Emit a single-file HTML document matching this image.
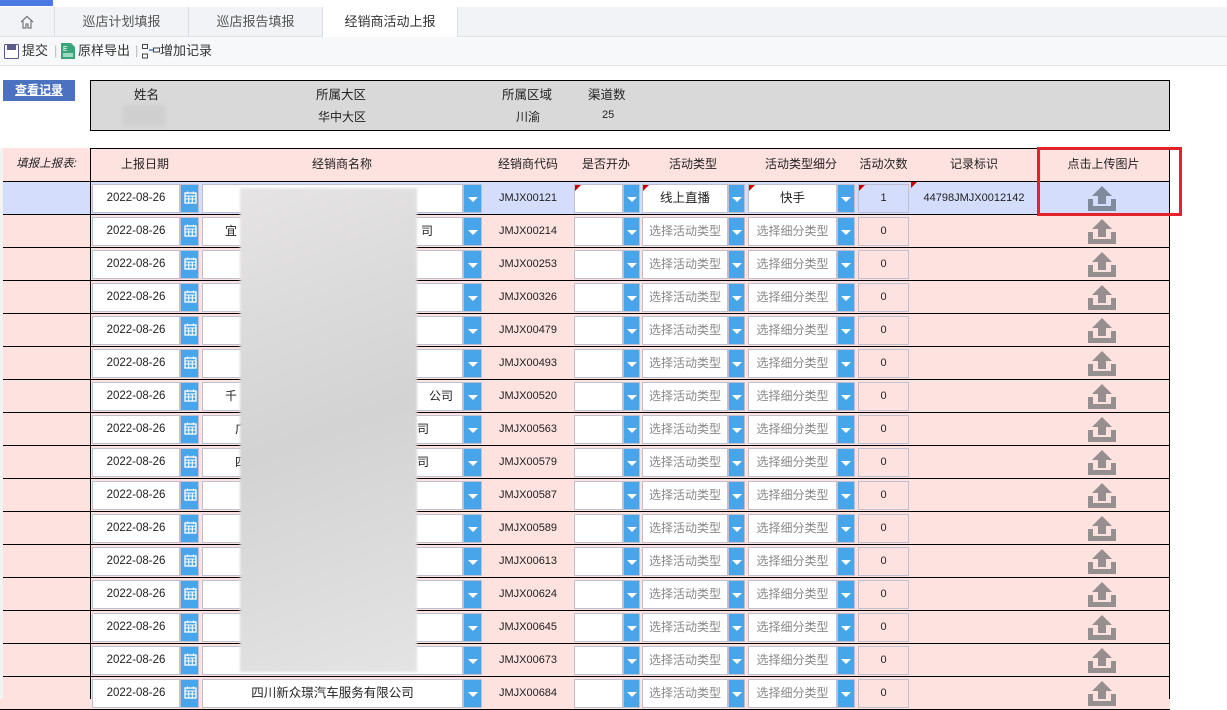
<!DOCTYPE html>
<html><head><meta charset="utf-8">
<style>
*{margin:0;padding:0;box-sizing:border-box}
body{width:1227px;height:699px;overflow:hidden;background:#fff;font-family:"Liberation Sans","Noto Sans CJK SC",sans-serif;font-size:12px;color:#222;position:relative}
.a{position:absolute}
.tabs{left:0;top:7px;width:1227px;height:30px;background:#f2f3f6;border-bottom:1px solid #e2e4e8}
.tab{top:0;height:30px;line-height:29px;text-align:center;font-size:13px;color:#555;border-right:1px solid #dcdee3}
.tb{left:0;top:37px;width:1227px;height:29px;background:#f7f8fa;border-bottom:1px solid #e4e4e4;font-size:13px;line-height:28px;color:#333}
.row{left:0;width:1170px;height:33px;border-bottom:1px solid #000;background:#fde2df}
.row.f{background:#d4ddfb}
.inp{top:2px;height:29px;background:#fff;border:1px solid #c0bfd0;text-align:center;line-height:27px;font-size:12px}
.btn{top:2px;height:29px;background:#48a5ea;border:1px solid #c0bfd0}
.btn.dd::after{content:"";position:absolute;left:50%;top:12px;margin-left:-5px;border-left:5px solid transparent;border-right:5px solid transparent;border-top:5px solid #fff}
.d{left:92px;width:88px;font-size:11.5px}
.cal{left:180px;width:19px}
.n{left:202px;width:261px}
.nb{left:463px;width:19px}
.code{left:484px;width:88px;top:0;height:32px;line-height:32px;text-align:center;font-size:11px}
.o{left:574px;width:49px}.ob{left:623px;width:17px}
.t{left:642px;width:86px;color:#888}.tbn{left:728px;width:17px}
.s{left:748px;width:89px;color:#888}.sb{left:837px;width:18px}
.c{left:858px;width:51px;background:#fde2df;font-size:11px}
.f .c{background:#d4ddfb}
.r{left:911px;width:126px;top:0;height:32px;line-height:32px;text-align:center;font-size:11px}
.up{left:1088px;top:3px}
.tri{position:absolute;left:0;top:0;border-right:6px solid transparent;border-top:6px solid #c00}
.vl{background:#000;width:1px}
.hd{top:0;height:33px;line-height:30px;text-align:center;font-size:12px}
</style></head><body>
<div class="a" style="left:0;top:0;width:53px;height:6px;background:#4a7ae0"></div>
<div class="a tabs">
<div class="a tab" style="left:0;width:55px"><svg width="16" height="16" viewBox="0 0 16 16" style="margin-top:7px"><path d="M2 8 L8 2.5 L14 8 M4 7 V14 H7 V10 H9 V14 H12 V7" fill="none" stroke="#777" stroke-width="1.2"/></svg></div>
<div class="a tab" style="left:55px;width:134px">巡店计划填报</div>
<div class="a tab" style="left:189px;width:134px">巡店报告填报</div>
<div class="a tab" style="left:323px;width:135px;background:#fff;color:#333">经销商活动上报</div>
</div>
<div class="a tb">
<svg class="a" style="left:4px;top:7px" width="15" height="15" viewBox="0 0 15 15"><rect x="0.5" y="0.5" width="14" height="14" rx="1" fill="#fff" stroke="#5a5a8a"/><rect x="3" y="1" width="9" height="5" fill="#5a5a8a"/></svg>
<span class="a" style="left:22px;top:0">提交</span>
<span class="a" style="left:54px;top:0;color:#bbb">|</span>
<svg class="a" style="left:61px;top:6px" width="14" height="16" viewBox="0 0 14 16"><path d="M0 0H10L14 4V16H0Z" fill="#3aa57a"/><text x="2" y="8" font-size="7" fill="#fff" font-family="Liberation Sans">E</text><rect x="2" y="10" width="10" height="4" fill="#9fd9bf"/></svg>
<span class="a" style="left:78px;top:0">原样导出</span>
<span class="a" style="left:135px;top:0;color:#bbb">|</span>
<svg class="a" style="left:142px;top:7px" width="18" height="15" viewBox="0 0 18 15"><rect x="0.5" y="0.5" width="5" height="4" fill="none" stroke="#444"/><rect x="0.5" y="10" width="5" height="4" fill="none" stroke="#444"/><path d="M7 6H11" stroke="#3a7ae0" stroke-width="1.5"/><rect x="11.5" y="4" width="6" height="4" fill="none" stroke="#444"/></svg>
<span class="a" style="left:160px;top:0">增加记录</span>
</div>
<div class="a" style="left:3px;top:80px;width:72px;height:21px;background:#4a72c0;color:#fff;font-weight:bold;text-align:center;line-height:21px;text-decoration:underline;font-size:12px">查看记录</div>
<div class="a" style="left:90px;top:80px;width:1080px;height:51px;background:#d9d9d9;border:1px solid #000;font-size:12.5px">
<span class="a" style="left:43px;top:3px">姓名</span>
<span class="a" style="left:225px;top:3px">所属大区</span>
<span class="a" style="left:411px;top:3px">所属区域</span>
<span class="a" style="left:497px;top:3px">渠道数</span>
<div class="a" style="left:32px;top:24px;width:42px;height:21px;background:#cfcfcf;filter:blur(2px)"></div>
<span class="a" style="left:227px;top:27px;font-size:12px">华中大区</span>
<span class="a" style="left:425px;top:27px;font-size:12px">川渝</span>
<span class="a" style="left:511px;top:28px;font-size:11px">25</span>
</div>
<!-- header -->
<div class="a" style="left:3px;top:148px;width:1167px;height:34px;background:#fde2df;border-bottom:1px solid #000"></div>
<div class="a" style="left:90px;top:148px;width:1080px;height:1px;background:#000"></div>
<div class="a hd" style="left:3px;width:87px;top:149px;font-style:italic;font-size:11.5px">填报上报表:</div>
<div class="a hd" style="left:90px;width:110px;top:149px">上报日期</div>
<div class="a hd" style="left:200px;width:284px;top:149px">经销商名称</div>
<div class="a hd" style="left:484px;width:88px;top:149px">经销商代码</div>
<div class="a hd" style="left:572px;width:68px;top:149px">是否开办</div>
<div class="a hd" style="left:640px;width:106px;top:149px">活动类型</div>
<div class="a hd" style="left:746px;width:110px;top:149px">活动类型细分</div>
<div class="a hd" style="left:856px;width:55px;top:149px">活动次数</div>
<div class="a hd" style="left:911px;width:126px;top:149px">记录标识</div>
<div class="a hd" style="left:1037px;width:133px;top:149px">点击上传图片</div>

<svg width="0" height="0" style="position:absolute"><defs>
<g id="cal"><rect x="4" y="8" width="11" height="10" fill="none" stroke="#fff" stroke-width="1.3"/><path d="M4 11H15M4 14H15M7.7 11V18M11.3 11V18M6.5 6.5V9M12.5 6.5V9" stroke="#fff" stroke-width="1.1"/></g>
<g id="up"><path d="M14 1 L24 11 H18 V19 H10 V11 H4 Z"/><path d="M0 14 H5 V21 H23 V14 H28 V26 H0 Z"/></g>
</defs></svg>

<!-- rows -->
<div class="a row f" style="top:182px"><div class="a inp d">2022-08-26</div><div class="a btn cal"><svg width="19" height="27"><use href="#cal"/></svg></div><div class="a inp n"></div><div class="a btn nb dd"></div><div class="a code">JMJX00121</div><div class="a inp o"><i class="tri"></i></div><div class="a btn ob dd"></div><div class="a inp t" style="color:#222;font-size:12.5px"><i class="tri"></i>线上直播</div><div class="a btn tbn dd"></div><div class="a inp s" style="color:#222;font-size:12.5px"><i class="tri"></i>快手</div><div class="a btn sb dd"></div><div class="a inp c"><i class="tri"></i>1</div><div class="a r"><i class="tri"></i>44798JMJX0012142</div><svg class="a up" width="28" height="26" fill="#7f8a9c"><use href="#up"/></svg></div>

<div class="a row" style="top:215px"><div class="a inp d">2022-08-26</div><div class="a btn cal"><svg width="19" height="27"><use href="#cal"/></svg></div><div class="a inp n" style="text-align:left;padding-left:22px">宜<span style="position:absolute;left:218px">司</span></div><div class="a btn nb dd"></div><div class="a code">JMJX00214</div><div class="a inp o"></div><div class="a btn ob dd"></div><div class="a inp t">选择活动类型</div><div class="a btn tbn dd"></div><div class="a inp s">选择细分类型</div><div class="a btn sb dd"></div><div class="a inp c">0</div><svg class="a up" width="28" height="26" fill="#958f8f"><use href="#up"/></svg></div>

<div class="a row" style="top:248px"><div class="a inp d">2022-08-26</div><div class="a btn cal"><svg width="19" height="27"><use href="#cal"/></svg></div><div class="a inp n"></div><div class="a btn nb dd"></div><div class="a code">JMJX00253</div><div class="a inp o"></div><div class="a btn ob dd"></div><div class="a inp t">选择活动类型</div><div class="a btn tbn dd"></div><div class="a inp s">选择细分类型</div><div class="a btn sb dd"></div><div class="a inp c">0</div><svg class="a up" width="28" height="26" fill="#958f8f"><use href="#up"/></svg></div>

<div class="a row" style="top:281px"><div class="a inp d">2022-08-26</div><div class="a btn cal"><svg width="19" height="27"><use href="#cal"/></svg></div><div class="a inp n"></div><div class="a btn nb dd"></div><div class="a code">JMJX00326</div><div class="a inp o"></div><div class="a btn ob dd"></div><div class="a inp t">选择活动类型</div><div class="a btn tbn dd"></div><div class="a inp s">选择细分类型</div><div class="a btn sb dd"></div><div class="a inp c">0</div><svg class="a up" width="28" height="26" fill="#958f8f"><use href="#up"/></svg></div>

<div class="a row" style="top:314px"><div class="a inp d">2022-08-26</div><div class="a btn cal"><svg width="19" height="27"><use href="#cal"/></svg></div><div class="a inp n"></div><div class="a btn nb dd"></div><div class="a code">JMJX00479</div><div class="a inp o"></div><div class="a btn ob dd"></div><div class="a inp t">选择活动类型</div><div class="a btn tbn dd"></div><div class="a inp s">选择细分类型</div><div class="a btn sb dd"></div><div class="a inp c">0</div><svg class="a up" width="28" height="26" fill="#958f8f"><use href="#up"/></svg></div>

<div class="a row" style="top:347px"><div class="a inp d">2022-08-26</div><div class="a btn cal"><svg width="19" height="27"><use href="#cal"/></svg></div><div class="a inp n"></div><div class="a btn nb dd"></div><div class="a code">JMJX00493</div><div class="a inp o"></div><div class="a btn ob dd"></div><div class="a inp t">选择活动类型</div><div class="a btn tbn dd"></div><div class="a inp s">选择细分类型</div><div class="a btn sb dd"></div><div class="a inp c">0</div><svg class="a up" width="28" height="26" fill="#958f8f"><use href="#up"/></svg></div>

<div class="a row" style="top:380px"><div class="a inp d">2022-08-26</div><div class="a btn cal"><svg width="19" height="27"><use href="#cal"/></svg></div><div class="a inp n" style="text-align:left;padding-left:22px">千<span style="position:absolute;left:226px">公司</span></div><div class="a btn nb dd"></div><div class="a code">JMJX00520</div><div class="a inp o"></div><div class="a btn ob dd"></div><div class="a inp t">选择活动类型</div><div class="a btn tbn dd"></div><div class="a inp s">选择细分类型</div><div class="a btn sb dd"></div><div class="a inp c">0</div><svg class="a up" width="28" height="26" fill="#958f8f"><use href="#up"/></svg></div>

<div class="a row" style="top:413px"><div class="a inp d">2022-08-26</div><div class="a btn cal"><svg width="19" height="27"><use href="#cal"/></svg></div><div class="a inp n" style="text-align:left;padding-left:32px">广<span style="position:absolute;left:214px">司</span></div><div class="a btn nb dd"></div><div class="a code">JMJX00563</div><div class="a inp o"></div><div class="a btn ob dd"></div><div class="a inp t">选择活动类型</div><div class="a btn tbn dd"></div><div class="a inp s">选择细分类型</div><div class="a btn sb dd"></div><div class="a inp c">0</div><svg class="a up" width="28" height="26" fill="#958f8f"><use href="#up"/></svg></div>

<div class="a row" style="top:446px"><div class="a inp d">2022-08-26</div><div class="a btn cal"><svg width="19" height="27"><use href="#cal"/></svg></div><div class="a inp n" style="text-align:left;padding-left:32px">四<span style="position:absolute;left:214px">司</span></div><div class="a btn nb dd"></div><div class="a code">JMJX00579</div><div class="a inp o"></div><div class="a btn ob dd"></div><div class="a inp t">选择活动类型</div><div class="a btn tbn dd"></div><div class="a inp s">选择细分类型</div><div class="a btn sb dd"></div><div class="a inp c">0</div><svg class="a up" width="28" height="26" fill="#958f8f"><use href="#up"/></svg></div>

<div class="a row" style="top:479px"><div class="a inp d">2022-08-26</div><div class="a btn cal"><svg width="19" height="27"><use href="#cal"/></svg></div><div class="a inp n"></div><div class="a btn nb dd"></div><div class="a code">JMJX00587</div><div class="a inp o"></div><div class="a btn ob dd"></div><div class="a inp t">选择活动类型</div><div class="a btn tbn dd"></div><div class="a inp s">选择细分类型</div><div class="a btn sb dd"></div><div class="a inp c">0</div><svg class="a up" width="28" height="26" fill="#958f8f"><use href="#up"/></svg></div>

<div class="a row" style="top:512px"><div class="a inp d">2022-08-26</div><div class="a btn cal"><svg width="19" height="27"><use href="#cal"/></svg></div><div class="a inp n"></div><div class="a btn nb dd"></div><div class="a code">JMJX00589</div><div class="a inp o"></div><div class="a btn ob dd"></div><div class="a inp t">选择活动类型</div><div class="a btn tbn dd"></div><div class="a inp s">选择细分类型</div><div class="a btn sb dd"></div><div class="a inp c">0</div><svg class="a up" width="28" height="26" fill="#958f8f"><use href="#up"/></svg></div>

<div class="a row" style="top:545px"><div class="a inp d">2022-08-26</div><div class="a btn cal"><svg width="19" height="27"><use href="#cal"/></svg></div><div class="a inp n"></div><div class="a btn nb dd"></div><div class="a code">JMJX00613</div><div class="a inp o"></div><div class="a btn ob dd"></div><div class="a inp t">选择活动类型</div><div class="a btn tbn dd"></div><div class="a inp s">选择细分类型</div><div class="a btn sb dd"></div><div class="a inp c">0</div><svg class="a up" width="28" height="26" fill="#958f8f"><use href="#up"/></svg></div>

<div class="a row" style="top:578px"><div class="a inp d">2022-08-26</div><div class="a btn cal"><svg width="19" height="27"><use href="#cal"/></svg></div><div class="a inp n"></div><div class="a btn nb dd"></div><div class="a code">JMJX00624</div><div class="a inp o"></div><div class="a btn ob dd"></div><div class="a inp t">选择活动类型</div><div class="a btn tbn dd"></div><div class="a inp s">选择细分类型</div><div class="a btn sb dd"></div><div class="a inp c">0</div><svg class="a up" width="28" height="26" fill="#958f8f"><use href="#up"/></svg></div>

<div class="a row" style="top:611px"><div class="a inp d">2022-08-26</div><div class="a btn cal"><svg width="19" height="27"><use href="#cal"/></svg></div><div class="a inp n"></div><div class="a btn nb dd"></div><div class="a code">JMJX00645</div><div class="a inp o"></div><div class="a btn ob dd"></div><div class="a inp t">选择活动类型</div><div class="a btn tbn dd"></div><div class="a inp s">选择细分类型</div><div class="a btn sb dd"></div><div class="a inp c">0</div><svg class="a up" width="28" height="26" fill="#958f8f"><use href="#up"/></svg></div>

<div class="a row" style="top:644px"><div class="a inp d">2022-08-26</div><div class="a btn cal"><svg width="19" height="27"><use href="#cal"/></svg></div><div class="a inp n"></div><div class="a btn nb dd"></div><div class="a code">JMJX00673</div><div class="a inp o"></div><div class="a btn ob dd"></div><div class="a inp t">选择活动类型</div><div class="a btn tbn dd"></div><div class="a inp s">选择细分类型</div><div class="a btn sb dd"></div><div class="a inp c">0</div><svg class="a up" width="28" height="26" fill="#958f8f"><use href="#up"/></svg></div>

<div class="a row" style="top:677px"><div class="a inp d">2022-08-26</div><div class="a btn cal"><svg width="19" height="27"><use href="#cal"/></svg></div><div class="a inp n" style="font-size:12.5px">四川新众璟汽车服务有限公司</div><div class="a btn nb dd"></div><div class="a code">JMJX00684</div><div class="a inp o"></div><div class="a btn ob dd"></div><div class="a inp t">选择活动类型</div><div class="a btn tbn dd"></div><div class="a inp s">选择细分类型</div><div class="a btn sb dd"></div><div class="a inp c">0</div><svg class="a up" width="28" height="26" fill="#958f8f"><use href="#up"/></svg></div>

<!-- vertical lines -->
<div class="a vl" style="left:90px;top:148px;height:551px"></div>
<div class="a vl" style="left:1169px;top:148px;height:551px"></div>
<div class="a" style="left:0;top:148px;width:3px;height:551px;background:#f3f3f3"></div>
<!-- blur mask -->
<div class="a" style="left:240px;top:188px;width:177px;height:484px;background:linear-gradient(160deg,#e6e4e4,#d3d3d3 50%,#e4e4e4);filter:blur(1px)"></div>
<!-- red highlight -->
<div class="a" style="left:1037px;top:147px;width:145px;height:69px;border:3px solid #e3222a"></div>
</body></html>
